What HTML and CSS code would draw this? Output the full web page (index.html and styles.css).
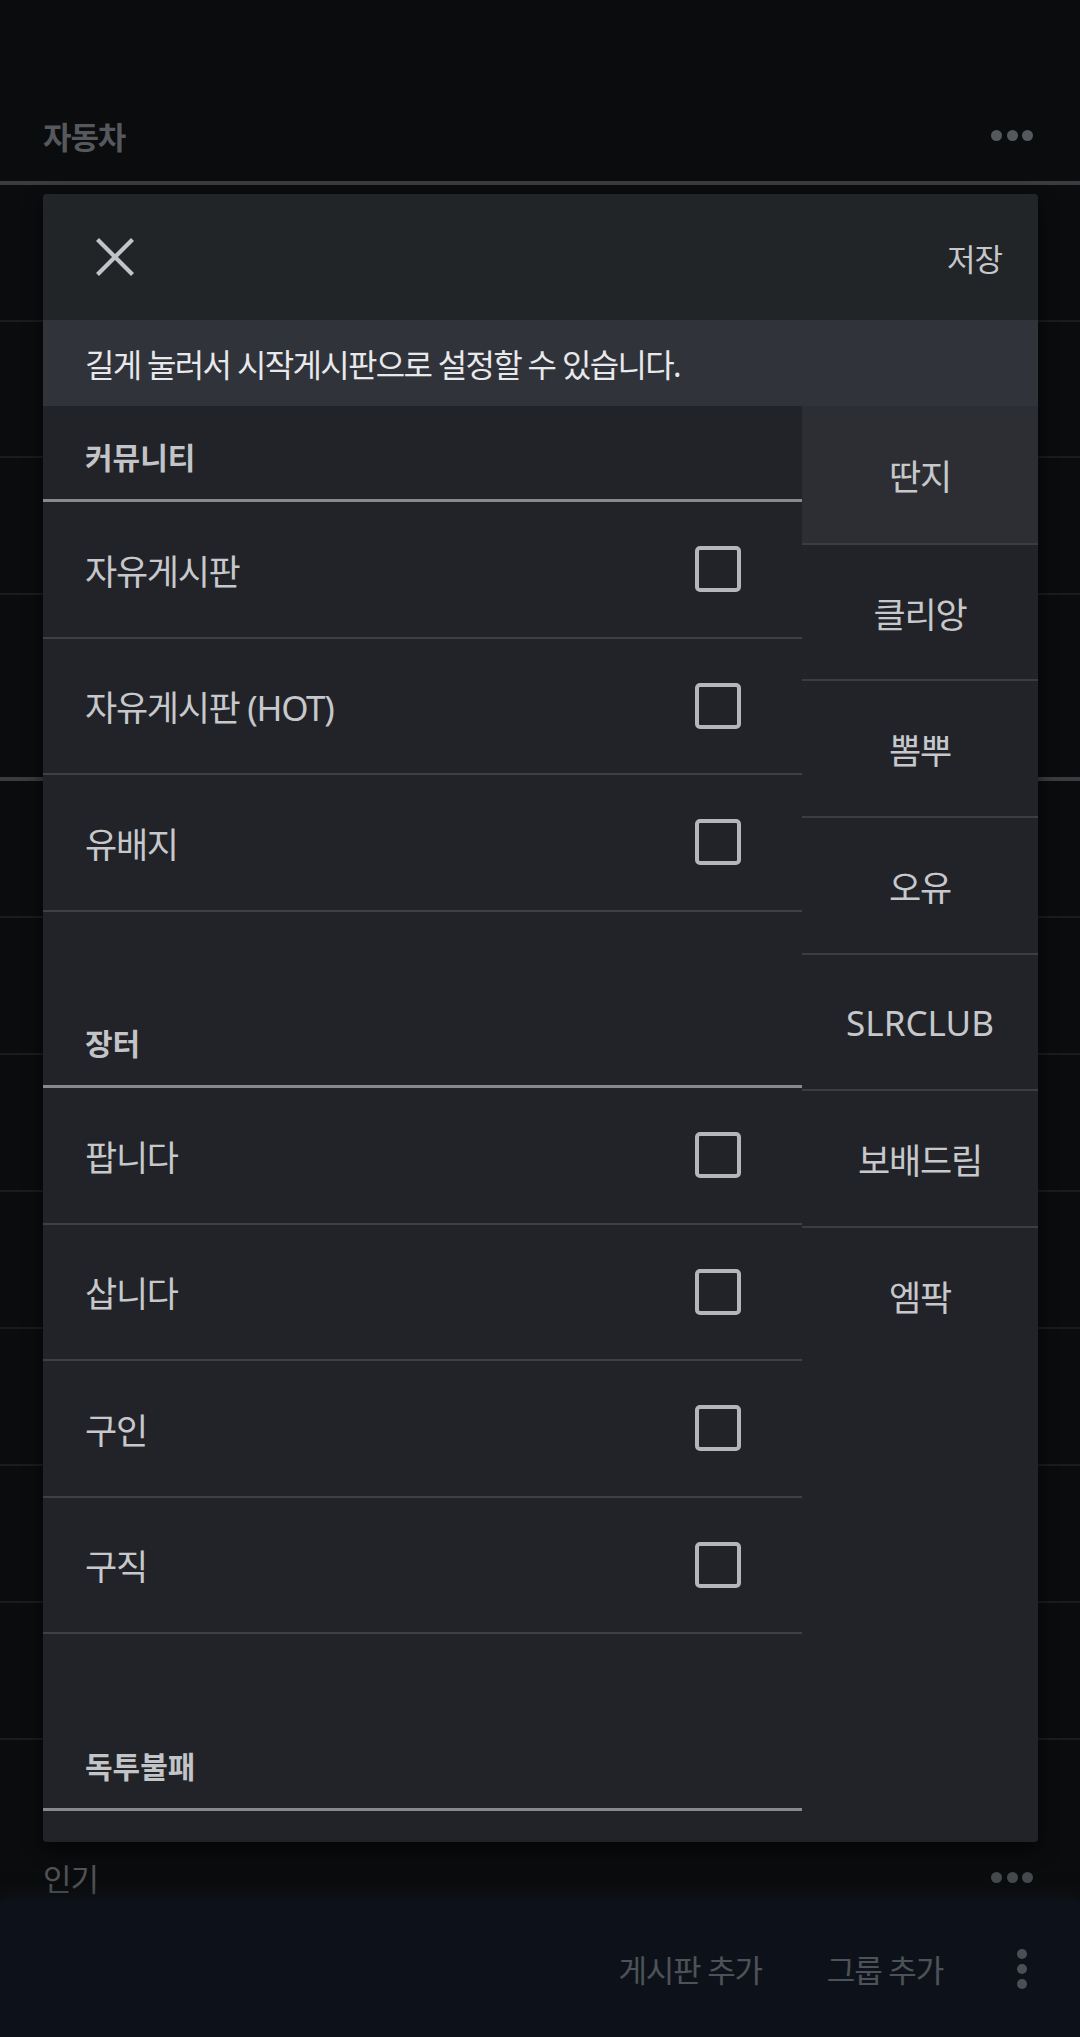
FILE: index.html
```html
<!DOCTYPE html>
<html lang="ko">
<head>
<meta charset="utf-8">
<title>게시판 설정</title>
<link rel="stylesheet" href="styles.css">
</head>
<body>
<div class="app">
  <main class="board-list">
    <div class="top-gap"></div>
    <div class="group-head">
      <span class="group-title">자동차</span>
      <span class="more-dots"><i></i><i></i><i></i></span>
    </div>
    <div class="bg-row"></div>
    <div class="bg-row"></div>
    <div class="bg-row"></div>
    <div class="group-head group-head--tall"></div>
    <div class="bg-row bg-row--wide"></div>
    <div class="bg-row bg-row--wide"></div>
    <div class="bg-row bg-row--wide"></div>
    <div class="bg-row bg-row--wide"></div>
    <div class="bg-row bg-row--wide"></div>
    <div class="bg-row bg-row--wide"></div>
    <div class="bg-row bg-row--wide"></div>
    <div class="group-head group-head--next">
      <span class="group-title group-title--light">인기</span>
      <span class="more-dots more-dots--dim"><i></i><i></i><i></i></span>
    </div>
  </main>

  <footer class="bottom-bar">
    <span class="bar-btn">게시판 추가</span>
    <span class="bar-btn">그룹 추가</span>
    <span class="vdots"><i></i><i></i><i></i></span>
  </footer>

  <section class="dialog">
    <header class="dialog-head">
      <svg class="close-icon" width="38" height="38" viewBox="0 0 38 38">
        <path d="M1.5 1.5 L36.5 36.5 M36.5 1.5 L1.5 36.5" stroke="#c2c4ca" stroke-width="4.2" fill="none"/>
      </svg>
      <span class="save-btn">저장</span>
    </header>
    <div class="hint">길게 눌러서 시작게시판으로 설정할 수 있습니다.</div>
    <div class="dialog-body">
      <div class="board-col">
        <div class="section">
          <div class="section-head">커뮤니티</div>
          <div class="row"><span>자유게시판</span><span class="checkbox"></span></div>
          <div class="row"><span>자유게시판 (HOT)</span><span class="checkbox"></span></div>
          <div class="row"><span>유배지</span><span class="checkbox"></span></div>
        </div>
        <div class="section">
          <div class="section-head">장터</div>
          <div class="row"><span>팝니다</span><span class="checkbox"></span></div>
          <div class="row"><span>삽니다</span><span class="checkbox"></span></div>
          <div class="row"><span>구인</span><span class="checkbox"></span></div>
          <div class="row"><span>구직</span><span class="checkbox"></span></div>
        </div>
        <div class="section">
          <div class="section-head">독투불패</div>
        </div>
      </div>
      <nav class="site-col">
        <div class="site site--active">딴지</div>
        <div class="site">클리앙</div>
        <div class="site">뽐뿌</div>
        <div class="site">오유</div>
        <div class="site site--latin">SLRCLUB</div>
        <div class="site">보배드림</div>
        <div class="site">엠팍</div>
      </nav>
    </div>
  </section>
</div>
</body>
</html>
```

FILE: styles.css
```css
* { box-sizing: border-box; }

html, body {
  margin: 0;
  padding: 0;
}

body {
  width: 1080px;
  height: 2037px;
  overflow: hidden;
  background: #0a0c0e;
  font-family: "Noto Sans", "Noto Sans CJK KR", sans-serif;
  color: #c6c8cb;
}

.app {
  position: relative;
  height: 2037px;
  display: flex;
  flex-direction: column;
}

/* ---------- background page ---------- */
.board-list {
  flex: 1;
  min-height: 0;
  overflow: hidden;
}

.top-gap { height: 89px; }

.group-head {
  height: 96px;
  border-bottom: 4px solid #3a3d40;
  display: flex;
  align-items: center;
  justify-content: space-between;
  padding: 0 47px 0 43px;
}

.group-head--tall { height: 186px; }

.group-head--next {
  margin-top: 92px;
  border-bottom-color: transparent;
}

.group-title {
  font-size: 31px;
  letter-spacing: -1.1px;
  font-weight: 700;
  color: #55585c;
}

.group-title--light {
  font-weight: 400;
  color: #505357;
}

.more-dots {
  display: flex;
  gap: 4.5px;
}

.more-dots i {
  display: block;
  width: 11px;
  height: 11px;
  border-radius: 50%;
  background: #55585c;
}

.more-dots--dim i { background: #46494d; }

.bg-row {
  height: 136.5px;
  border-bottom: 2px solid #1a1d20;
}

.bg-row--wide { height: 137px; }

/* ---------- bottom bar ---------- */
.bottom-bar {
  flex-shrink: 0;
  height: 137px;
  background: #0d121a;
  display: flex;
  align-items: center;
  justify-content: flex-end;
  padding-right: 53px;
  gap: 65px;
  box-shadow: 0 -6px 14px rgba(20, 26, 34, 0.5);
}

.bar-btn {
  font-size: 31px;
  letter-spacing: -1.2px;
  color: #4d5259;
}

.vdots {
  display: flex;
  flex-direction: column;
  gap: 5px;
  margin-left: 9px;
}

.vdots i {
  display: block;
  width: 10px;
  height: 10px;
  border-radius: 50%;
  background: #4a4f56;
}

/* ---------- dialog ---------- */
.dialog {
  position: absolute;
  left: 43px;
  top: 194px;
  width: 995px;
  height: 1648px;
  border-radius: 4px;
  overflow: hidden;
  background: #212328;
  display: flex;
  flex-direction: column;
  box-shadow: 0 8px 18px rgba(0, 0, 0, 0.65);
}

.dialog-head {
  flex-shrink: 0;
  height: 126px;
  background: #222528;
  display: flex;
  align-items: center;
  justify-content: space-between;
  padding: 0 36px 0 53px;
}

.close-icon { display: block; }

.save-btn {
  font-size: 31px;
  letter-spacing: -1px;
  color: #c5c7cb;
}

.hint {
  flex-shrink: 0;
  height: 86px;
  background: #30333a;
  display: flex;
  align-items: center;
  padding-left: 42px;
  font-size: 32px;
  letter-spacing: -1.7px;
  color: #e8e9eb;
}

.dialog-body {
  flex: 1;
  min-height: 0;
  display: flex;
}

.board-col {
  width: 759px;
  flex-shrink: 0;
  background: #212328;
}

.section + .section { margin-top: 80.5px; }

.section-head {
  height: 96px;
  border-bottom: 3px solid #86898d;
  display: flex;
  align-items: center;
  padding: 7px 42px 0;
  font-size: 30px;
  letter-spacing: 0;
  font-weight: 700;
  color: #c2c4c7;
}

.row {
  height: 136.5px;
  border-bottom: 2px solid #3d4044;
  display: flex;
  align-items: center;
  justify-content: space-between;
  padding: 0 61px 0 42px;
  font-size: 35px;
  letter-spacing: -1.3px;
  color: #c6c8cb;
}

.checkbox {
  width: 46px;
  height: 46px;
  border: 4px solid #b4b6b9;
  border-radius: 5px;
}

.site-col {
  flex: 1;
  background: #212328;
}

.site {
  height: 136.7px;
  display: flex;
  align-items: center;
  justify-content: center;
  font-size: 35px;
  letter-spacing: -1.2px;
  color: #c6c8cb;
}

.site + .site { border-top: 2px solid #3a3d41; }

.site--active { background: #2c2e33; }

.site--latin { letter-spacing: 0; }
```
